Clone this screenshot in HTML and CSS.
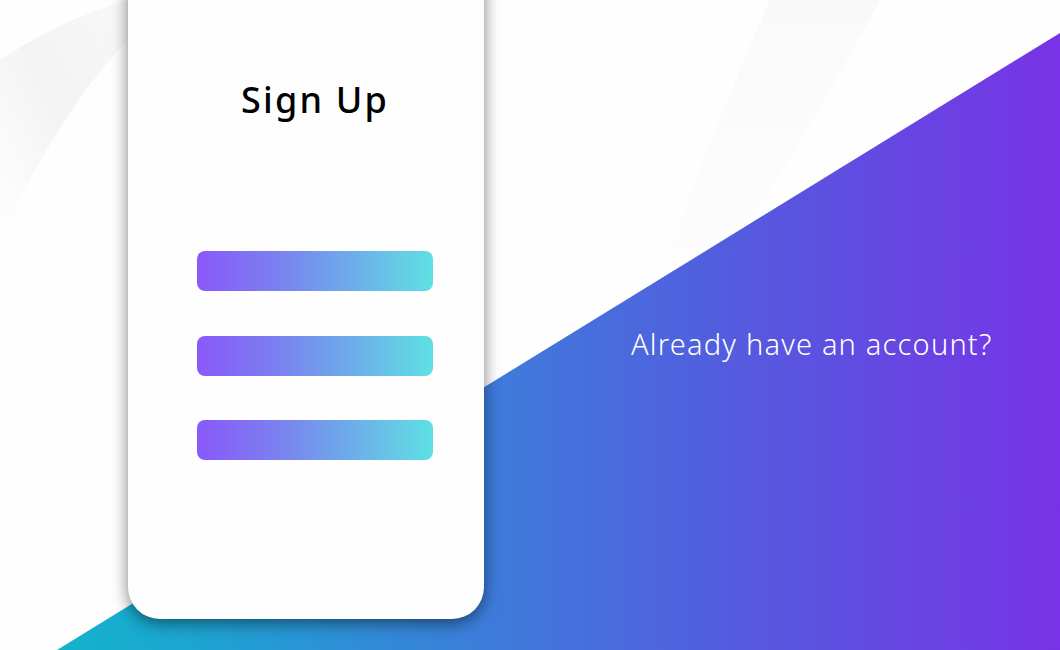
FILE: index.html
```html
<!DOCTYPE html>
<html lang="en">
<head>
<meta charset="utf-8">
<title>Sign Up</title>
<link rel="stylesheet" href="styles.css">
</head>
<body>
<div class="stage">
  <svg class="deco" width="1060" height="650" viewBox="0 0 1060 650" aria-hidden="true">
    <defs>
      <linearGradient id="sw1" x1="0" y1="1" x2="1" y2="0">
        <stop offset="0" stop-color="#f6f6f6" stop-opacity="0"/>
        <stop offset="0.5" stop-color="#f3f3f3"/>
        <stop offset="1" stop-color="#f8f8f8"/>
      </linearGradient>
      <linearGradient id="sw2" x1="0" y1="1" x2="0" y2="0">
        <stop offset="0" stop-color="#fafafa" stop-opacity="0"/>
        <stop offset="1" stop-color="#f9f9f9"/>
      </linearGradient>
    </defs>
    <path d="M0 60 Q60 20 128 0 L128 40 Q60 110 0 240 Z" fill="url(#sw1)"/>
    <path d="M770 0 L880 0 Q800 150 680 330 L640 330 Q700 160 770 0 Z" fill="url(#sw2)"/>
  </svg>
  <div class="wave"></div>
  <section class="phone">
    <h1 class="title">Sign Up</h1>
    <div class="fields">
      <div class="field"></div>
      <div class="field"></div>
      <div class="field"></div>
    </div>
  </section>
  <aside class="side">
    <p class="prompt">Already have an account?</p>
  </aside>
</div>
</body>
</html>
```

FILE: styles.css
```css
* { box-sizing: border-box; }
html, body { margin: 0; padding: 0; }
body { background: #fefefe; font-family: "Noto Sans", "Liberation Sans", sans-serif; }

.stage {
  position: relative;
  width: 1060px;
  height: 650px;
  overflow: hidden;
  background: #fefefe;
  display: flex;
  align-items: flex-start;
}

.deco { position: absolute; left: 0; top: 0; }

.wave {
  position: absolute;
  inset: 0;
  background: linear-gradient(90deg, #10b8ca 0px, #1da4d2 200px, #3f7adb 500px, #5658df 760px, #7833e6 1060px);
  clip-path: polygon(57px 650px, 1060px 33px, 1060px 650px);
}

.phone {
  position: relative;
  margin: -40px 0 0 128px;
  width: 356px;
  height: 659px;
  background: #fefefe;
  border-radius: 0 0 32px 32px;
  box-shadow: 0 4px 16px rgba(0, 0, 0, 0.5);
  display: flex;
  flex-direction: column;
  align-items: center;
  padding: 118px 0 0 18px;
}

.title {
  margin: 0;
  font-size: 36px;
  line-height: 44px;
  font-weight: 500;
  letter-spacing: 2.2px;
  color: #000;
}

.fields {
  margin-top: 129px;
  display: flex;
  flex-direction: column;
  gap: 44.5px;
}

.field {
  width: 236px;
  height: 40px;
  border-radius: 8px;
  background: linear-gradient(90deg, #8a58fb 0%, #7a82ef 35%, #6dacea 65%, #5fe0e3 100%);
}

.side {
  position: relative;
  margin-left: 147px;
  padding-top: 326px;
}

.prompt {
  margin: 0;
  font-size: 29px;
  line-height: 36px;
  font-weight: 300;
  letter-spacing: 1.2px;
  color: #ffffff;
  white-space: nowrap;
}
```
